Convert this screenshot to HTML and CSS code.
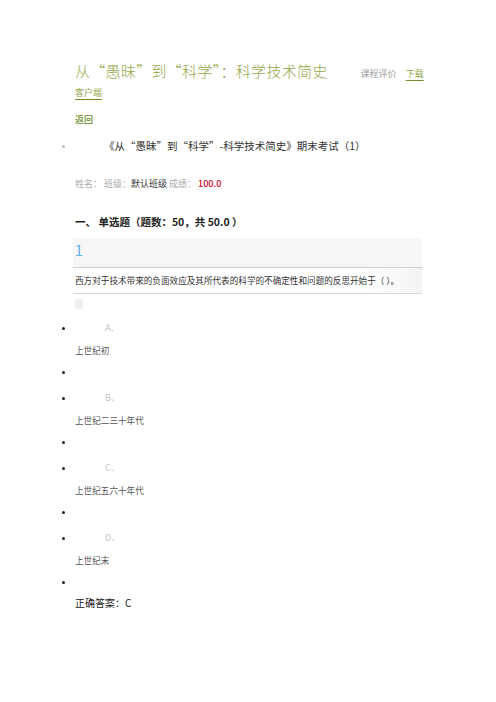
FILE: index.html
```html
<!DOCTYPE html>
<html lang="zh-CN">
<head>
    <meta charset="UTF-8">
    <meta name="viewport" content="width=device-width, initial-scale=1.0">
    <title>期末考试</title>
    <link rel="stylesheet" href="styles.css">
</head>
<body>
    <div class="page">
        <div class="course-head">
            <span class="course-title">从“愚昧”到“科学”：科学技术简史</span><a class="rate" href="#">课程评价</a><a class="dl" href="#">下载客户端</a>
        </div>

        <a class="back" href="#">返回</a>

        <ul class="exam-list">
            <li class="exam-title">《从“愚昧”到“科学”-科学技术简史》期末考试（1）</li>
        </ul>

        <p class="info">姓名： 班级：<span class="dark">默认班级</span> 成绩： <span class="score">100.0</span></p>

        <h2 class="section">一、 单选题（题数：50，共 50.0 ）</h2>

        <div class="question">
            <div class="q-num">1</div>
            <div class="q-text">西方对于技术带来的负面效应及其所代表的科学的不确定性和问题的反思开始于（ ）。</div>
            <div class="q-mark"></div>
        </div>

        <ul class="options">
            <li class="opt"><span class="opt-label">A、</span><p class="opt-text">上世纪初</p></li>
            <li class="blank"></li>
            <li class="opt"><span class="opt-label">B、</span><p class="opt-text">上世纪二三十年代</p></li>
            <li class="blank"></li>
            <li class="opt"><span class="opt-label">C、</span><p class="opt-text">上世纪五六十年代</p></li>
            <li class="blank"></li>
            <li class="opt"><span class="opt-label">D、</span><p class="opt-text">上世纪末</p></li>
            <li class="blank"></li>
        </ul>

        <p class="answer">正确答案：C</p>
    </div>
</body>
</html>
```

FILE: styles.css
```css
body {
    margin: 0;
    background: #fff;
    font-family: "Noto Sans CJK SC", "Liberation Sans", sans-serif;
    color: #333;
}
.page {
    width: 347px;
    padding: 61px 0 40px 75px;
}
a {
    text-decoration: none;
}
.course-head {
    width: 350px;
    font-size: 9px;
    line-height: 19px;
}
.course-title {
    font-size: 15px;
    font-weight: 300;
    letter-spacing: 0.3px;
    color: #94a84c;
    margin-right: 33px;
}
.rate {
    font-size: 9px;
    color: #a0a0a0;
    margin-right: 9px;
}
.dl {
    font-size: 9px;
    color: #94a84c;
    text-decoration: underline;
    text-decoration-color: #7a8c2a;
    text-underline-offset: 3px;
}
.back {
    display: block;
    margin-top: 10px;
    font-size: 9px;
    line-height: 16px;
    color: #6e8f2a;
    font-weight: 500;
}
.exam-list {
    margin: 10px 0 0;
    padding: 0;
    list-style: disc;
    color: #bbb;
}
.exam-title {
    font-size: 10.5px;
    line-height: 16px;
    color: #333;
    padding-left: 29px;
}
.exam-title::marker {
    color: #bbb;
    font-size: 8px;
}
.info {
    margin: 22px 0 0;
    font-size: 9px;
    line-height: 16px;
    color: #aaa;
}
.dark {
    color: #333;
}
.score {
    color: #d0021b;
    font-weight: 500;
}
.section {
    margin: 22px 0 0;
    font-size: 10.5px;
    line-height: 16px;
    font-weight: 700;
    color: #222;
}
.question {
    margin: 8px 0 0 -2px;
}
.q-num {
    background: #f6f6f6;
    border-bottom: 1px solid #cfcfcf;
    height: 29px;
    padding-left: 2px;
    font-size: 14px;
    line-height: 24px;
    color: #5aaee0;
}
.q-text {
    padding: 4px 0 4px 2px;
    font-size: 8.6px;
    line-height: 17px;
    color: #333;
    border-bottom: 1px solid #d8d8d8;
    background: linear-gradient(to right, #fff 85%, #f3f3f3);
}
.q-mark {
    width: 8px;
    height: 10px;
    margin: 5px 0 0 2px;
    background: #eee;
    border-radius: 2px;
}
.options {
    margin: 8px 0 0;
    padding: 0;
    list-style: disc;
}
.options li {
    font-size: 9px;
    line-height: 22px;
    color: #222;
}
.opt-label {
    padding-left: 30px;
    color: #c8c8c8;
}
.opt-text {
    margin: 0;
    color: #555;
    font-size: 8.6px;
}
.blank {
    height: 22px;
    margin-bottom: 4px;
}
.blank:last-child {
    margin-bottom: 0;
}
.answer {
    margin: 2px 0 0;
    font-size: 10px;
    line-height: 16px;
    color: #222;
}
```
